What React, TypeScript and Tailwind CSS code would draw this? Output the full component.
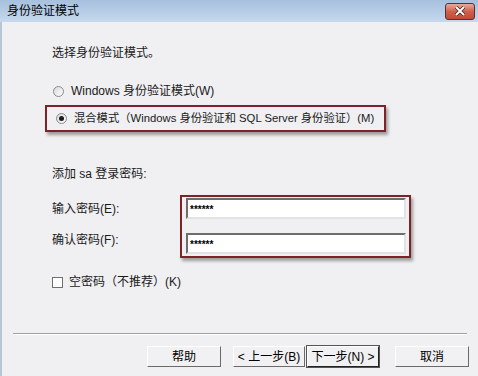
import React from "react";

const font = { fontFamily: '"Liberation Sans", "Noto Sans CJK SC", sans-serif' };

function Radio({ checked }: { checked?: boolean }) {
    return (
        <span className="w-[11px] h-[11px] rounded-full border border-[#8a8a8a] bg-gradient-to-br from-[#d8d8d8] to-white flex items-center justify-center shrink-0">
            {checked && <span className="w-[5px] h-[5px] rounded-full bg-[#1a1a1a]" />}
        </span>
    );
}

function Btn({ label, main }: { label: string; main?: boolean }) {
    return (
        <div
            className={
                "h-[21px] flex items-center justify-center text-[12px] text-black bg-[#f1f0f2] border border-t-white border-l-white whitespace-nowrap " +
                (main
                    ? "border-r-[#222] border-b-[#222] outline outline-1 outline-[#555]"
                    : "border-r-[#6a6a6a] border-b-[#6a6a6a]")
            }
            style={{ width: label.length > 3 ? 72 : 74 }}
        >
            {label}
        </div>
    );
}

function PwInput() {
    return (
        <div className="h-[21px] w-[220px] bg-white border-2 border-t-[#6d6d6d] border-l-[#6d6d6d] border-r-[#e3e3e3] border-b-[#e3e3e3] flex items-center pl-[2px]">
            <span className="text-[10px] leading-none font-bold text-black pt-[2px]">******</span>
        </div>
    );
}

export default function App() {
    return (
        <div className="w-[478px] h-[376px] flex flex-col bg-[#f0eff2] text-[12px] text-[#1a1a1a]" style={font}>
            <div className="h-[22px] shrink-0 flex items-center justify-between pl-[7px] pr-[3px] bg-gradient-to-b from-[#a6c0de] to-[#c6d9ee]">
                <span className="text-[12px] text-black">身份验证模式</span>
                <div className="w-[30px] h-[17px] rounded-[3px] border border-[#5b3033] bg-gradient-to-b from-[#e8aaa0] via-[#d0604a] to-[#c04a36] flex items-center justify-center">
                    <svg width="12" height="10" viewBox="0 0 12 10">
                        <path d="M2 1 L10 9 M10 1 L2 9" stroke="#3b1b18" strokeWidth="3.4" />
                        <path d="M2 1 L10 9 M10 1 L2 9" stroke="#fff" strokeWidth="2" />
                    </svg>
                </div>
            </div>
            <div className="flex-1 flex flex-col border-l-2 border-[#b7c6d6]">
                <div className="pl-[50px] pt-[23px] leading-[16px]">选择身份验证模式。</div>
                <div className="pl-[51px] mt-[22px] flex items-center gap-[7px] leading-[16px] whitespace-nowrap">
                    <Radio />
                    <span>Windows 身份验证模式(W)</span>
                </div>
                <div className="ml-[43px] mt-[6px] w-[341px] h-[27px] border-2 border-[#7d2226] shadow-[2px_3px_3px_rgba(0,0,0,0.35)] flex items-center gap-[7px] pl-[9px] whitespace-nowrap">
                    <Radio checked />
                    <span className="text-[11.3px]">混合模式（Windows 身份验证和 SQL Server 身份验证）(M)</span>
                </div>
                <div className="pl-[50px] mt-[34px] leading-[16px]">添加 sa 登录密码:</div>
                <div className="flex mt-[13px]">
                    <div className="w-[178px] pl-[50px] flex flex-col pt-[6px] gap-[15px] leading-[16px]">
                        <span>输入密码(E):</span>
                        <span>确认密码(F):</span>
                    </div>
                    <div className="w-[231px] h-[63px] border-2 border-[#7d2226] shadow-[2px_3px_3px_rgba(0,0,0,0.35)] flex flex-col pl-[4px] pt-[1px] gap-[14px]">
                        <PwInput />
                        <PwInput />
                    </div>
                </div>
                <div className="pl-[50px] mt-[16px] flex items-center gap-[6px] leading-[16px]">
                    <span className="w-[11px] h-[11px] border border-[#707070] bg-white" />
                    <span>空密码（不推荐）(K)</span>
                </div>
                <div className="flex-1" />
                <div className="mx-[11px] h-[2px] border-t border-[#a0a0a0] border-b border-b-white" />
                <div className="flex items-center pl-[145px] pt-[11px] pb-[9px]">
                    <Btn label="帮助" />
                    <div className="ml-[12px] flex gap-[2px]">
                        <Btn label="< 上一步(B)" />
                        <Btn label="下一步(N) >" main />
                    </div>
                    <div className="ml-[16px]">
                        <Btn label="取消" />
                    </div>
                </div>
            </div>
        </div>
    );
}
